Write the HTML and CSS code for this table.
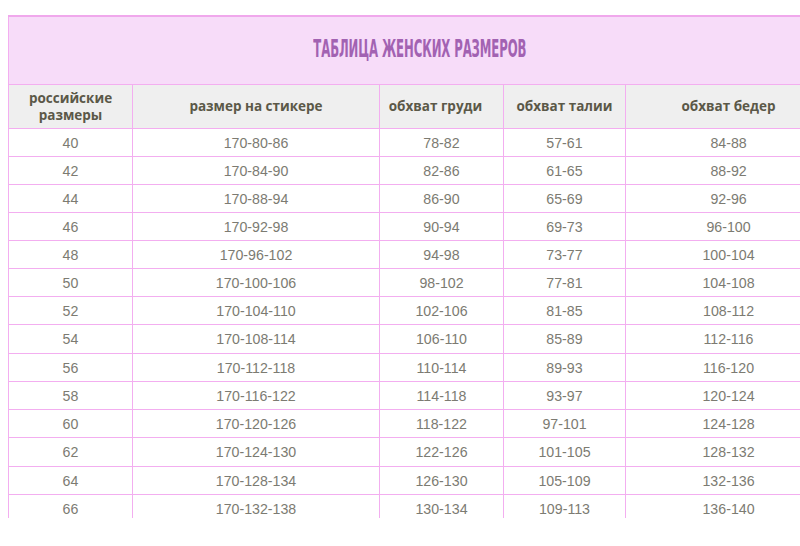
FILE: index.html
```html
<!DOCTYPE html>
<html lang="ru">
<head>
<meta charset="utf-8">
<link rel="stylesheet" href="styles.css">
</head>
<body>
<div class="frame">
<table class="sizes">
  <colgroup>
    <col class="c1"><col class="c2"><col class="c3"><col class="c4"><col class="c5">
  </colgroup>
  <thead>
    <tr class="title-row"><th colspan="5"><span class="title">ТАБЛИЦА ЖЕНСКИХ РАЗМЕРОВ</span></th></tr>
    <tr class="head-row">
      <th>российские<br>размеры</th>
      <th>размер на стикере</th>
      <th class="shift">обхват груди</th>
      <th>обхват талии</th>
      <th>обхват бедер</th>
    </tr>
  </thead>
  <tbody>
    <tr><td>40</td><td>170-80-86</td><td>78-82</td><td>57-61</td><td>84-88</td></tr>
    <tr><td>42</td><td>170-84-90</td><td>82-86</td><td>61-65</td><td>88-92</td></tr>
    <tr><td>44</td><td>170-88-94</td><td>86-90</td><td>65-69</td><td>92-96</td></tr>
    <tr><td>46</td><td>170-92-98</td><td>90-94</td><td>69-73</td><td>96-100</td></tr>
    <tr><td>48</td><td>170-96-102</td><td>94-98</td><td>73-77</td><td>100-104</td></tr>
    <tr><td>50</td><td>170-100-106</td><td>98-102</td><td>77-81</td><td>104-108</td></tr>
    <tr><td>52</td><td>170-104-110</td><td>102-106</td><td>81-85</td><td>108-112</td></tr>
    <tr class="tall"><td>54</td><td>170-108-114</td><td>106-110</td><td>85-89</td><td>112-116</td></tr>
    <tr><td>56</td><td>170-112-118</td><td>110-114</td><td>89-93</td><td>116-120</td></tr>
    <tr><td>58</td><td>170-116-122</td><td>114-118</td><td>93-97</td><td>120-124</td></tr>
    <tr><td>60</td><td>170-120-126</td><td>118-122</td><td>97-101</td><td>124-128</td></tr>
    <tr class="tall"><td>62</td><td>170-124-130</td><td>122-126</td><td>101-105</td><td>128-132</td></tr>
    <tr><td>64</td><td>170-128-134</td><td>126-130</td><td>105-109</td><td>132-136</td></tr>
    <tr><td>66</td><td>170-132-138</td><td>130-134</td><td>109-113</td><td>136-140</td></tr>
  </tbody>
</table>
</div>
</body>
</html>
```

FILE: styles.css
```css
html, body {
  margin: 0;
  padding: 0;
  background: #ffffff;
  overflow: hidden;
}
.frame {
  width: 800px;
  height: 518px;
  padding: 15px 0 0 8px;
  box-sizing: border-box;
  overflow: hidden;
}
.sizes {
  border-collapse: collapse;
  table-layout: fixed;
  width: 823px;
  font-family: "Liberation Sans", Arial, sans-serif;
}
.c1 { width: 124px; }
.c2 { width: 247px; }
.c3 { width: 124px; }
.c4 { width: 122px; }
.c5 { width: 206px; }
.sizes th, .sizes td {
  border: 1px solid #f3aef0;
  text-align: center;
  padding: 0;
}
.title-row th {
  height: 67px;
  background: #f7dcf9;
  border-top: 2px solid #f0a8ec;
}
.title {
  display: inline-block;
  font-family: "DejaVu Sans Condensed", "DejaVu Sans", sans-serif;
  font-weight: 700;
  font-size: 25px;
  color: #a262b2;
  transform: scaleX(0.52);
  letter-spacing: -0.2px;
  position: relative;
  top: -2px;
}
.head-row th {
  height: 43px;
  background: #efefef;
  font-family: "Open Sans", sans-serif;
  font-weight: 700;
  font-size: 13.5px;
  line-height: 17px;
  color: #5b5848;
}
.head-row th.shift {
  padding-right: 12px;
}
.sizes td {
  height: 27px;
  font-size: 14.2px;
  color: #7c7b72;
}
.sizes tr.tall td {
  height: 28px;
}
```
